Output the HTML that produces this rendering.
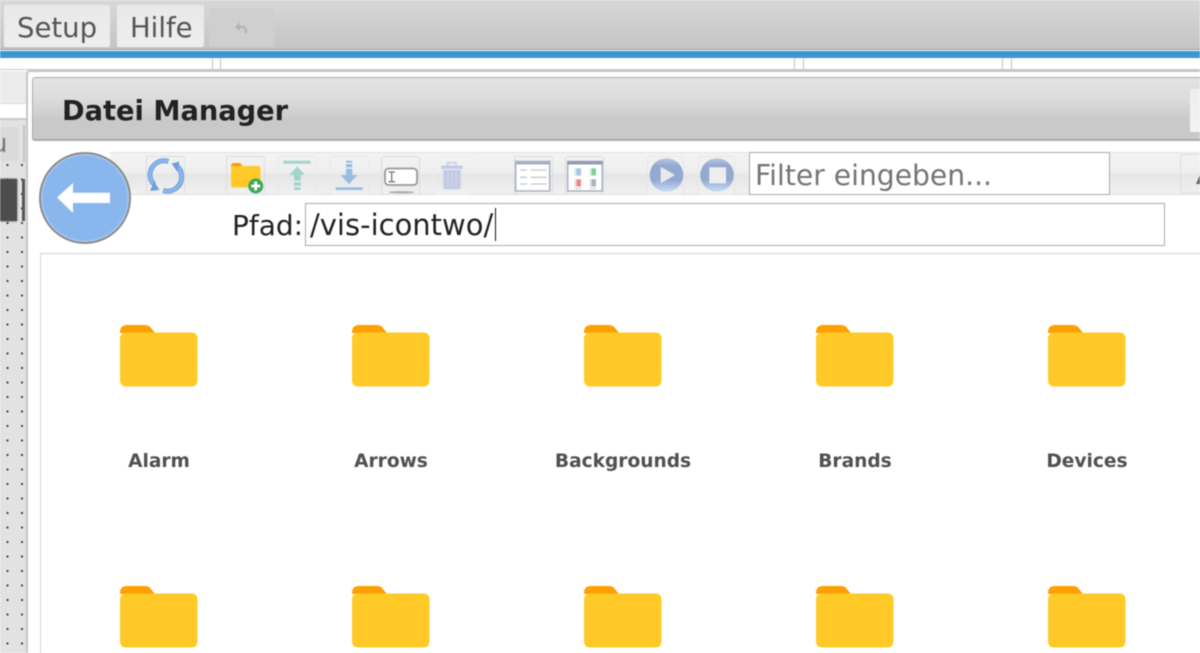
<!DOCTYPE html>
<html lang="de"><head><meta charset="utf-8"><title>Datei Manager</title>
<style>
html,body{margin:0;padding:0}
body{width:1200px;height:653px;overflow:hidden;position:relative;background:#fff;font-family:"DejaVu Sans",sans-serif}
#w{position:absolute;left:0;top:0;width:1200px;height:653px;overflow:hidden;filter:blur(.45px)}
.a{position:absolute;box-sizing:border-box}
.t{position:absolute;white-space:nowrap;line-height:1}
.btn{position:absolute;top:156px;width:39px;height:39px;box-sizing:border-box;border:1px solid #dcdcdc;border-radius:3px}
.lbl{position:absolute;top:452px;width:200px;text-align:center;font-weight:bold;font-size:18.6px;line-height:20px;color:#505050;white-space:nowrap}
.f{position:absolute;width:78px;height:64px}
</style></head><body><div id="w">
<div class="a" style="left:0;top:0;width:1200px;height:50px;background:linear-gradient(#d8d8d8,#c4c4c4)"></div>
<div class="a" style="left:4px;top:5px;width:106px;height:42px;background:linear-gradient(#e9e9e9,#eeeeee);border-radius:2px"></div>
<div class="t" style="left:17px;top:15px;font-size:27.5px;color:#555">Setup</div>
<div class="a" style="left:117px;top:5px;width:87px;height:42px;background:linear-gradient(#e9e9e9,#eeeeee);border-radius:2px"></div>
<div class="t" style="left:130px;top:15px;font-size:27.5px;color:#555">Hilfe</div>
<div class="a" style="left:209px;top:8px;width:65px;height:39px;background:#cfcfcf;border-radius:2px"></div>

<div class="a" style="left:0;top:49px;width:1200px;height:1px;background:#999"></div>
<div class="a" style="left:0;top:51px;width:1200px;height:7px;background:#3a97d4"></div>
<div class="a" style="left:0;top:58px;width:1200px;height:12px;background:#fff;border-bottom:1px solid #c8c8c8"></div>
<div class="a" style="left:212px;top:58px;width:9px;height:13px;border-left:1px solid #c4c4c4;border-right:1px solid #c4c4c4"></div>
<div class="a" style="left:794px;top:58px;width:10px;height:13px;border-left:1px solid #c4c4c4;border-right:1px solid #c4c4c4"></div>
<div class="a" style="left:1002px;top:58px;width:10px;height:13px;border-left:1px solid #c4c4c4;border-right:1px solid #c4c4c4"></div>

<!-- left strip -->
<div class="a" style="left:0;top:71px;width:26px;height:33px;background:#ececec;border-bottom:1px solid #dcdcdc"></div>
<div class="a" style="left:0;top:104px;width:26px;height:14px;background:#fff"></div>
<div class="a" style="left:0;top:118px;width:26px;height:535px;background:#e2e2e2;border-top:2px solid #c8c8c8"></div>
<svg class="a" style="left:0;top:0" width="26" height="653"><defs><pattern id="d" width="14.5" height="14.5" patternUnits="userSpaceOnUse" x="0" y="165"><rect x="6.500" y="-1" width="2" height="2" fill="#444"/><rect x="6.500" y="13.500" width="2" height="2" fill="#444"/></pattern></defs><rect y="164" width="26" height="489" fill="url(#d)"/></svg>
<div class="a" style="left:0;top:127px;width:18px;height:34px;background:#dadada;border-radius:0 2px 2px 0"></div>
<div class="t" style="left:-9px;top:131px;font-size:26px;color:#777">u</div>
<div class="a" style="left:23px;top:125px;width:2px;height:37px;background:#c4c4c4"></div>
<div class="a" style="left:0;top:179px;width:17px;height:42px;background:#4d4d4d;box-shadow:0 0 2px #444"></div>
<div class="a" style="left:22px;top:179px;width:3px;height:42px;background:#555"></div>

<!-- dialog -->
<div class="a" style="left:25.500px;top:70px;width:1175px;height:583px;background:#fff;border:1px solid #c6c6c6;border-width:2px 0 0 2px;border-radius:4px 0 0 0"></div>
<div class="a" style="left:32px;top:77px;width:1168px;height:64px;background:linear-gradient(#e3e3e3 0,#dedede 30%,#c9c9c9 70%,#c9c9c9 100%);border:1px solid #aaa;border-width:1px 0 2px 1px;border-radius:3px 0 0 3px"></div>
<div class="t" style="left:62px;top:97.500px;font-size:27.25px;font-weight:bold;color:#222">Datei Manager</div>
<div class="a" style="left:1190px;top:89px;width:10px;height:43px;background:linear-gradient(#eeeeee,#f3f3f3);border-radius:2px 0 0 2px"></div>

<!-- toolbar -->
<div class="a" style="left:110px;top:152px;width:1090px;height:43px;background:linear-gradient(#f3f3f3 0,#efefef 45%,#e6e6e6 55%,#f1f1f1 100%);border-top:1px solid #e2e2e2;border-bottom:1px solid #dedede"></div>

<div class="btn" style="left:146px"></div>
<div class="btn" style="left:226px"></div>
<div class="btn" style="left:278px;border-color:#e8e8e8"></div>
<div class="btn" style="left:330px;border-color:#e8e8e8"></div>
<div class="btn" style="left:381px"></div>
<div class="btn" style="left:433px;border-color:#ececec"></div>
<div class="btn" style="left:514px"></div>
<div class="btn" style="left:565px"></div>
<div class="btn" style="left:647px;width:37px;border-color:#e6e6e6"></div>
<div class="btn" style="left:698px;width:37px;border-color:#e6e6e6"></div>

<svg class="a" style="left:0;top:0" width="1200" height="653" viewBox="0 0 1200 653" fill="none">
<defs><linearGradient id="g" x1="0" y1="0" x2="0" y2="1"><stop offset="0" stop-color="#b9c9e6"/><stop offset=".22" stop-color="#94a9d0"/><stop offset=".65" stop-color="#94a9d0"/><stop offset="1" stop-color="#cbdef6"/></linearGradient></defs>
<!-- undo -->
<path d="M235 27 L240 22.500 V31 Z" fill="#b2b2b2"/><path d="M239 27 H243 Q246.500 27 245.500 33" stroke="#b2b2b2" stroke-width="2.200"/>
<!-- refresh -->
<path d="M168.500 161.500 C158 158.500 150.500 166 150 174.500 C150 178 151.500 182 154.500 184.500" stroke="#6f9fdc" stroke-width="5"/><path d="M168.500 161.500 C158 158.500 150.500 166 150 174.500 C150 178 151.500 182 154.500 184.500" stroke="#8db5ea" stroke-width="3"/>
<path d="M150 191 L159.500 190 L154 181.500 Z" fill="#6f9fdc"/>
<path d="M163 190.500 C173 193.500 182 186 181.500 176.500 C181.500 172 180 168.500 177 166.500" stroke="#6f9fdc" stroke-width="5"/><path d="M163 190.500 C173 193.500 182 186 181.500 176.500 C181.500 172 180 168.500 177 166.500" stroke="#8db5ea" stroke-width="3"/>
<path d="M179.500 161.500 L171.500 163.500 L177.500 172 Z" fill="#6f9fdc"/>
<!-- new folder -->
<path d="M231 166 Q231 163 234 163 H239 Q241 163 242 165.500 L242.500 167 H231 Z" fill="#f59e0b"/>
<path d="M231 168 Q231 166 233 166 H258.500 Q260.500 166 260.500 168 V185 Q260.500 187.500 258.500 187.500 H233 Q231 187.500 231 185 Z" fill="#ffca28"/>
<circle cx="255.700" cy="186" r="7.500" fill="#3fa757"/><path d="M255.700 181.500 V190.500 M251.200 186 H260.200" stroke="#fff" stroke-width="2.800"/>
<!-- up -->
<rect x="283.300" y="160.700" width="27.400" height="3" fill="#9ed5cc"/>
<path d="M297.300 166.500 L305 175 H300.700 V180.500 H294 V175 H289.300 Z" fill="#9ed5cc"/>
<rect x="294" y="182.300" width="6.700" height="3.500" fill="#9ed5cc"/><rect x="294" y="187.300" width="6.700" height="2.700" fill="#9ed5cc"/>
<!-- down -->
<rect x="346" y="160.700" width="6.300" height="2" fill="#98bce2"/><rect x="346" y="164" width="6.300" height="3.300" fill="#98bce2"/>
<path d="M346 168.700 H352.300 V175 H357.300 L349 184.300 L340.700 175 H346 Z" fill="#98bce2"/>
<rect x="335.700" y="187.300" width="27" height="2.700" fill="#98bce2"/>
<!-- rename -->
<rect x="385" y="168.500" width="32" height="16.500" rx="3.500" fill="#fff" stroke="#999" stroke-width="1.800"/>
<path d="M388.500 172 H395 M391.700 172 V181.700 M388.500 181.700 H395" stroke="#777" stroke-width="1.300"/>
<ellipse cx="401.700" cy="192.300" rx="13" ry="1.100" fill="#aaa"/>
<!-- trash -->
<path d="M447.500 165.500 V162.800 H456 V165.500" stroke="#c4cae6" stroke-width="1.500"/>
<rect x="441" y="165.500" width="21.700" height="3.500" rx="1" fill="#c4cae6"/>
<path d="M443.300 170 H460.700 V186.500 Q460.700 189.300 458 189.300 H446 Q443.300 189.300 443.300 186.500 Z" fill="#c4cae6"/>
<path d="M448 172 V187 M452 172 V187 M456 172 V187" stroke="#d2d6ec" stroke-width="1"/>
<!-- list view -->
<rect x="515.700" y="161.500" width="34" height="29.500" fill="#fff" stroke="#a7b1c2" stroke-width="1.500"/>
<rect x="515.500" y="161" width="34.500" height="3.500" fill="#a7b1c2"/>
<path d="M520 170 H527 M530.700 170 H546.700 M520 177.300 H527 M530.700 177.300 H546.700 M520 184 H527 M530.700 184 H546.700" stroke="#c8c8c8" stroke-width="1.300"/>
<!-- grid view -->
<rect x="567.700" y="161.500" width="34.500" height="29.500" fill="#fff" stroke="#a7b1c2" stroke-width="1.500"/>
<rect x="567.500" y="161" width="35" height="3.500" fill="#939cb0"/>
<rect x="574.300" y="168.300" width="6.700" height="7.700" fill="#dfe6f2"/><rect x="576.500" y="168.300" width="4.500" height="7" fill="#a3c6ec"/>
<rect x="589.300" y="168.300" width="6.700" height="7.700" fill="#dff0e4"/><rect x="591.500" y="168.300" width="4.500" height="7" fill="#7fd09a"/>
<rect x="574.300" y="179.300" width="6.700" height="7.700" fill="#f2dede"/><rect x="576.500" y="179.300" width="4.500" height="7" fill="#ef8585"/>
<rect x="589.300" y="179.300" width="6.700" height="7.700" fill="#e6e6e6"/><rect x="591.500" y="179.300" width="4.500" height="7" fill="#b0b0b0"/>
<path d="M575 188.500 H581 M590 188.500 H596" stroke="#ccc" stroke-width="1"/>
<!-- play / stop -->
<circle cx="666.500" cy="175" r="16.800" fill="url(#g)"/><path d="M660.700 166.700 L675 175 L660.700 183.300 Z" fill="#e8e9ee"/>
<circle cx="717" cy="175" r="16.800" fill="url(#g)"/><rect x="709.300" y="167.300" width="16.700" height="16" fill="#eeeef0"/>
</svg>

<div class="a" style="left:749px;top:152px;width:361px;height:43px;background:#fff;border:1px solid #aaa"></div>
<div class="t" style="left:755px;top:162px;font-size:28.2px;color:#757575">Filter eingeben...</div>
<div class="a" style="left:1180px;top:154px;width:20px;height:39px;border:1px solid #dcdcdc;border-right:0;border-radius:3px 0 0 3px"></div>
<div class="a" style="left:1196px;top:175px;width:0;height:0;border-left:4px solid transparent;border-bottom:9px solid #666"></div>

<!-- back button -->
<div class="a" style="left:39px;top:152px;width:92px;height:92px;border-radius:50%;background:#8ab6ee;border:2.500px solid #8a8a8a;box-shadow:inset 0 0 2px #fff"></div>
<svg class="a" style="left:0;top:0" width="200" height="260" viewBox="0 0 200 260"><path d="M57 197.500 L73 183 V192.700 H110 V203 H73 V213 Z" fill="#fff"/></svg>

<!-- path -->
<div class="t" style="left:232px;top:212px;font-size:28px;color:#222">Pfad:</div>
<div class="a" style="left:305px;top:203px;width:860px;height:43px;background:#fff;border:1px solid #aaa"></div>
<div class="t" style="left:310px;top:211px;font-size:29px;color:#222">/vis-icontwo/</div>
<div class="a" style="left:495px;top:208px;width:1px;height:33px;background:#111"></div>

<!-- content -->
<div class="a" style="left:40px;top:253px;width:1160px;height:400px;background:#fff;border:1px solid #d4d4d4;border-width:1px 0 0 1px"></div>

<svg width="0" height="0" style="position:absolute"><defs><g id="fo"><path d="M0 7 Q0 0 7 0 H25 Q29 0 31 3 L35 8 H0 Z" fill="#ffa000"/><path d="M0 14 Q0 7.500 6.500 7.500 H71 Q77.500 7.500 77.500 14 V55 Q77.500 61.500 71 61.500 H6.500 Q0 61.500 0 55 Z" fill="#ffca28"/></g></defs></svg>
<svg class="f" style="left:120px;top:325px" viewBox="0 0 78 64"><use href="#fo"/></svg>
<svg class="f" style="left:352px;top:325px" viewBox="0 0 78 64"><use href="#fo"/></svg>
<svg class="f" style="left:584px;top:325px" viewBox="0 0 78 64"><use href="#fo"/></svg>
<svg class="f" style="left:816px;top:325px" viewBox="0 0 78 64"><use href="#fo"/></svg>
<svg class="f" style="left:1048px;top:325px" viewBox="0 0 78 64"><use href="#fo"/></svg>
<svg class="f" style="left:120px;top:586px" viewBox="0 0 78 64"><use href="#fo"/></svg>
<svg class="f" style="left:352px;top:586px" viewBox="0 0 78 64"><use href="#fo"/></svg>
<svg class="f" style="left:584px;top:586px" viewBox="0 0 78 64"><use href="#fo"/></svg>
<svg class="f" style="left:816px;top:586px" viewBox="0 0 78 64"><use href="#fo"/></svg>
<svg class="f" style="left:1048px;top:586px" viewBox="0 0 78 64"><use href="#fo"/></svg>

<div class="lbl" style="left:59px">Alarm</div>
<div class="lbl" style="left:291px">Arrows</div>
<div class="lbl" style="left:523px">Backgrounds</div>
<div class="lbl" style="left:755px">Brands</div>
<div class="lbl" style="left:987px">Devices</div>
</div></body></html>
